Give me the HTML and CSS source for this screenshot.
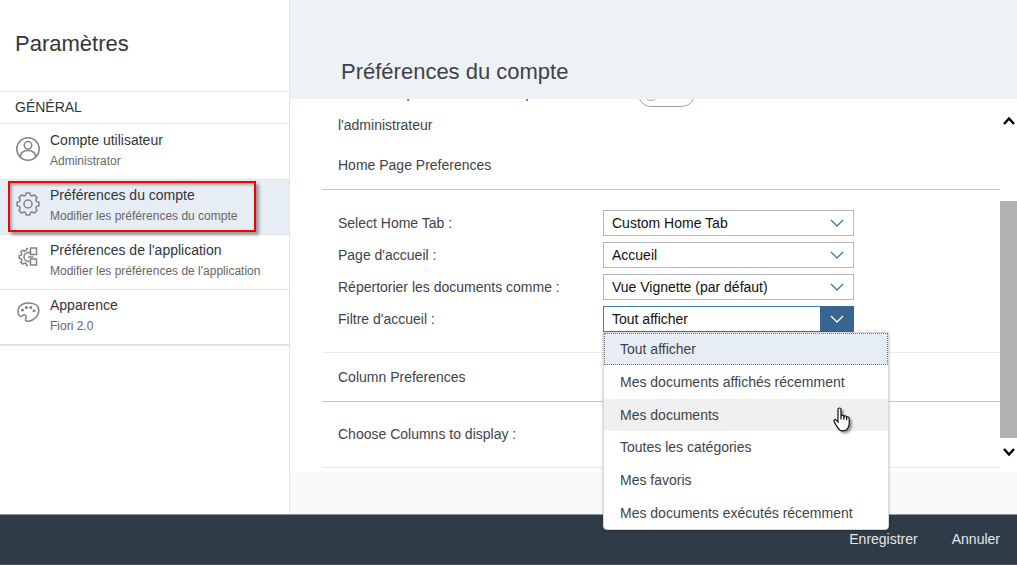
FILE: index.html
```html
<!DOCTYPE html>
<html lang="fr">
<head>
    <meta charset="UTF-8">
    <meta name="viewport" content="width=device-width, initial-scale=1.0">
    <title>Paramètres</title>
    <link rel="stylesheet" href="styles.css">
</head>
<body>

<div class="layout">
    <nav class="sidebar">
        <h1 class="sidebar-title">Paramètres</h1>
        <h2 class="sidebar-group">GÉNÉRAL</h2>
        <ul class="nav-list">
            <li class="nav-item">
                <a href="#compte">
                    <svg class="nav-icon" viewBox="0 0 24 24">
                        <circle cx="12" cy="12" r="11.2"/>
                        <circle cx="12" cy="8.3" r="3.7"/>
                        <path d="M4.2 19.900C4.800 15.800 8 13.600 12 13.600s7.200 2.200 7.800 6.300"/>
                    </svg>
                    <span class="nav-text">
                        <span class="nav-title">Compte utilisateur</span>
                        <span class="nav-sub">Administrator</span>
                    </span>
                </a>
            </li>
            <li class="nav-item active">
                <a href="#preferences">
                    <svg class="nav-icon" viewBox="0 0 24 24">
                        <path d="M9.400 3.400 10.200 1h3.600l.8 2.400 1.400.6 2.300-1.100 2.700 2.700L19.900 8l.6 1.400 2.400.8v3.600l-2.400.8-.6 1.400 1.100 2.400-2.600 2.600-2.400-1.100-1.400.6-.8 2.400h-3.600l-.8-2.400-1.400-.6L5.600 21 3 18.400 4.100 16l-.6-1.400-2.400-.8v-3.600l2.400-.8.6-1.400L3 5.600 5.700 2.900 8 4z"/>
                        <circle cx="12" cy="12" r="4"/>
                    </svg>
                    <span class="nav-text">
                        <span class="nav-title">Préférences du compte</span>
                        <span class="nav-sub">Modifier les préférences du compte</span>
                    </span>
                </a>
            </li>
            <li class="nav-item">
                <a href="#application">
                    <svg class="nav-icon" viewBox="0 0 24 24">
                        <path d="M12 1.500h-1.300l-.6 2-1.500.6-1.900-1L4.800 5l1 1.900-.6 1.300-2 .6v2.500l2 .6.6 1.300-1 1.900 1.900 1.900 1.900-1 1.500.6.6 2H12"/>
                        <path d="M14.500 5.500H12.500a4.500 4.500 0 0 0 0 9h2M14.500 1h6v6.500h-6zM14.500 12h6v6h-6zM12 10h5.500"/>
                    </svg>
                    <span class="nav-text">
                        <span class="nav-title">Préférences de l'application</span>
                        <span class="nav-sub">Modifier les préférences de l'application</span>
                    </span>
                </a>
            </li>
            <li class="nav-item">
                <a href="#apparence">
                    <svg class="nav-icon" viewBox="0 0 24 24">
                        <path d="M2.300 11.500C1 5 5.500 1 12.500 1 18.500 1 22.800 3.600 22.800 8.200c0 5.800-4.800 10.200-9.800 11-2.500.3-4.200-.7-3.400-2.200 1-1.700.8-4-1-4.200-1.900-.2-2.400 2-4 1.700-1.300-.3-2-1.500-2.300-3z"/>
                        <g class="dots">
                            <circle cx="6.500" cy="8" r="1.500"/>
                            <circle cx="10.300" cy="5.500" r="1.500"/>
                            <circle cx="14.800" cy="5.500" r="1.500"/>
                            <circle cx="18" cy="8.800" r="1.500"/>
                        </g>
                    </svg>
                    <span class="nav-text">
                        <span class="nav-title">Apparence</span>
                        <span class="nav-sub">Fiori 2.0</span>
                    </span>
                </a>
            </li>
        </ul>
    </nav>

    <main class="panel">
        <h2 class="panel-title">Préférences du compte</h2>

        <div class="panel-body">
            <form class="form" id="prefs">
                <div class="row-admin">
                    <label for="admin">Utiliser les paramètres définis par l'administrateur</label>
                    <input type="checkbox" id="admin" class="switch">
                </div>

                <h3 class="section-title">Home Page Preferences</h3>
                <div class="fields">
                    <label for="tab">Select Home Tab :</label>
                    <div class="select">
                        <select id="tab"><option>Custom Home Tab</option></select>
                        <svg class="arrow" viewBox="0 0 14 8"><path d="M1 1l6 6 6-6"/></svg>
                    </div>

                    <label for="home">Page d'accueil :</label>
                    <div class="select">
                        <select id="home"><option>Accueil</option></select>
                        <svg class="arrow" viewBox="0 0 14 8"><path d="M1 1l6 6 6-6"/></svg>
                    </div>

                    <label for="view">Répertorier les documents comme :</label>
                    <div class="select">
                        <select id="view"><option>Vue Vignette (par défaut)</option></select>
                        <svg class="arrow" viewBox="0 0 14 8"><path d="M1 1l6 6 6-6"/></svg>
                    </div>

                    <label for="filter">Filtre d'accueil :</label>
                    <div class="select open">
                        <select id="filter"><option>Tout afficher</option></select>
                        <svg class="arrow" viewBox="0 0 14 8"><path d="M1 1l6 6 6-6"/></svg>
                        <ul class="menu" role="listbox">
                            <li class="selected" role="option">Tout afficher</li>
                            <li role="option">Mes documents affichés récemment</li>
                            <li class="hover" role="option">Mes documents
                                <svg class="pointer" viewBox="0 0 18 25">
                                    <path d="M5 2.500C5 .5 8 .5 8 2.500V9c.3-1.300 2.700-1.200 2.900.5.500-1.100 2.500-.8 2.700.8.700-.9 2.600-.4 2.600 1.200V17c0 2.300-1.200 3.500-1.700 4.600-.7 1.400-2 2.200-4.500 2.200-3 0-4.300-1.300-5.200-3.100L1.200 14.900C.3 13 2.300 11.800 3.500 13.300L5 15z"/>
                                    <path d="M8 9v3.500M10.900 9.500v3.300M13.600 10.300v3"/>
                                </svg>
                            </li>
                            <li role="option">Toutes les catégories</li>
                            <li role="option">Mes favoris</li>
                            <li role="option">Mes documents exécutés récemment</li>
                        </ul>
                    </div>
                </div>

                <h3 class="section-title">Column Preferences</h3>
                <p class="columns">Choose Columns to display :</p>
            </form>

            <div class="scrollbar">
                <button type="button" class="scroll-btn" aria-label="Haut">
                    <svg viewBox="0 0 12 9"><path d="M1 8l5-5.500L11 8"/></svg>
                </button>
                <div class="track"><div class="thumb"></div></div>
                <button type="button" class="scroll-btn" aria-label="Bas">
                    <svg viewBox="0 0 12 9"><path d="M1 1l5 5.500L11 1"/></svg>
                </button>
            </div>
        </div>
    </main>
</div>

<footer class="footer">
    <button type="submit" form="prefs" class="footer-btn">Enregistrer</button>
    <button type="button" class="footer-btn">Annuler</button>
</footer>

</body>
</html>
```

FILE: styles.css
```css
*, *::before, *::after {
    box-sizing: border-box;
}
body {
    font-family: "Liberation Sans", Arial, sans-serif;
    font-size: 14px;
    margin: 0;
    color: #3f4347;
    background-color: #fff;
    display: flex;
    flex-direction: column;
    min-height: 100vh;
}
h1, h2, h3, p, ul {
    margin: 0;
    padding: 0;
    font-weight: normal;
    list-style: none;
}
.layout {
    display: flex;
    flex: 1;
}

/* left navigation */
.sidebar {
    flex: 0 0 290px;
    border-right: 1px solid #e5e5e5;
    color: #32363a;
}
.sidebar-title {
    font-size: 22px;
    line-height: 24px;
    padding: 32px 15px 35px;
}
.sidebar-group {
    font-size: 14px;
    line-height: 31px;
    padding: 0 15px;
    border-top: 1px solid #e5e5e5;
    border-bottom: 1px solid #e5e5e5;
}
.nav-list {
    padding-top: 1px;
    border-bottom: 1px solid #dfe6ed;
}
.nav-item {
    position: relative;
    border-bottom: 1px solid #e0e3e6;
}
.nav-item a {
    display: flex;
    gap: 10px;
    padding: 5px 16px 7px;
    color: inherit;
    text-decoration: none;
}
.nav-item.active {
    background-color: #e6edf5;
}
.nav-item.active::after {
    content: "";
    position: absolute;
    top: 1px;
    left: 8px;
    width: 248px;
    height: 51px;
    border: 2px solid #f50000;
    box-shadow: 3px 3px 3px rgba(0, 0, 0, 0.35), inset 2px 2px 3px rgba(0, 0, 0, 0.3);
}
.nav-icon {
    width: 24px;
    height: 24px;
    margin-top: 7px;
    fill: none;
    stroke: #808487;
    stroke-width: 1.5;
}
.nav-icon .dots {
    fill: #808487;
    stroke: none;
}
.nav-text {
    display: flex;
    flex-direction: column;
    height: 42px;
    white-space: nowrap;
}
.nav-title {
    line-height: 20px;
}
.nav-sub {
    font-size: 12px;
    line-height: 22px;
    color: #666;
}

/* right panel */
.panel {
    flex: 1;
    background-color: #fafafa;
}
.panel-title {
    font-size: 22px;
    line-height: 24px;
    padding: 60px 51px 15px;
    background-color: #edf2f7;
}
.panel-body {
    display: flex;
    background-color: #fff;
}
.form {
    flex: 1;
    padding: 0 0 4px 32px;
}
.row-admin {
    display: grid;
    grid-template-columns: 265px 1fr;
    align-items: end;
    align-content: end;
    height: 42px;
    padding-left: 16px;
    overflow: hidden;
}
.row-admin label {
    line-height: 32px;
}
.switch {
    appearance: none;
    width: 57px;
    height: 26px;
    margin: 0 0 34px 35px;
    padding: 5px;
    border: 1px solid #a0a3a6;
    border-radius: 13px;
}
.switch::before {
    content: "";
    display: block;
    width: 14px;
    height: 14px;
    border: 1px solid #a0a3a6;
    border-radius: 50%;
}
.section-title {
    font-size: 14px;
    line-height: 48px;
    padding-left: 16px;
    border-bottom: 1px solid #c3c5c7;
}
.fields {
    display: grid;
    grid-template-columns: 265px 251px;
    row-gap: 6px;
    align-items: center;
    padding: 20px 0 20px 16px;
    border-bottom: 1px solid #ebebeb;
}
.columns {
    line-height: 65px;
    padding-left: 16px;
    border-bottom: 1px solid #ebebeb;
}
.select {
    position: relative;
}
.select select {
    appearance: none;
    display: block;
    width: 100%;
    height: 26px;
    padding: 0 8px;
    font: inherit;
    color: #111;
    background-color: #fff;
    border: 1px solid #b5b8bb;
    border-radius: 0;
}
.arrow {
    position: absolute;
    top: 0;
    right: 0;
    width: 34px;
    height: 26px;
    padding: 9px 10px;
    fill: none;
    stroke: #3f75a2;
    stroke-width: 1.3;
    pointer-events: none;
}
.select.open select {
    border-color: #427cac;
}
.select.open .arrow {
    background-color: #386690;
    stroke: #fff;
}
.menu {
    position: absolute;
    top: 100%;
    left: 0;
    z-index: 2;
    width: 286px;
    background-color: #fff;
    border: 1px solid #d5d8db;
    border-radius: 0 0 4px 4px;
    box-shadow: 0 1px 3px rgba(0, 0, 0, 0.25);
}
.menu li {
    position: relative;
    line-height: 32px;
    padding: 0 16px;
    margin-bottom: 1px;
    white-space: nowrap;
}
.menu .selected {
    background-color: #e6edf5;
    outline: 1px dotted #777;
    outline-offset: -1px;
}
.menu .hover {
    margin-bottom: 0;
    background-color: #f0f0f0;
}
.menu li:last-child {
    margin-bottom: 0;
}
.pointer {
    position: absolute;
    top: 8px;
    right: 37px;
    width: 18px;
    height: 25px;
    fill: #fff;
    stroke: #111;
    stroke-width: 1.2;
    filter: drop-shadow(2px 2px 1px rgba(0, 0, 0, 0.4));
}

/* scrollbar */
.scrollbar {
    display: flex;
    flex-direction: column;
    width: 17px;
    padding: 7px 0 6px;
}
.scroll-btn {
    display: flex;
    align-items: center;
    justify-content: center;
    height: 28px;
    padding: 0;
    border: none;
    background: none;
}
.scroll-btn svg {
    width: 12px;
    height: 9px;
    fill: none;
    stroke: #000;
    stroke-width: 2.5;
}
.track {
    display: flex;
    flex: 1;
    align-items: flex-end;
}
.thumb {
    width: 100%;
    height: 78%;
    background-color: #b0b1b2;
}

/* footer */
.footer {
    display: flex;
    justify-content: flex-end;
    gap: 34px;
    height: 51px;
    padding: 0 17px 2px;
    background-color: #2f3c48;
    border-top: 1px solid #8d959c;
    border-bottom: 1px solid #4a4f54;
}
.footer-btn {
    padding: 0;
    font: inherit;
    color: #e3e6e9;
    background: none;
    border: none;
    cursor: pointer;
}
```
